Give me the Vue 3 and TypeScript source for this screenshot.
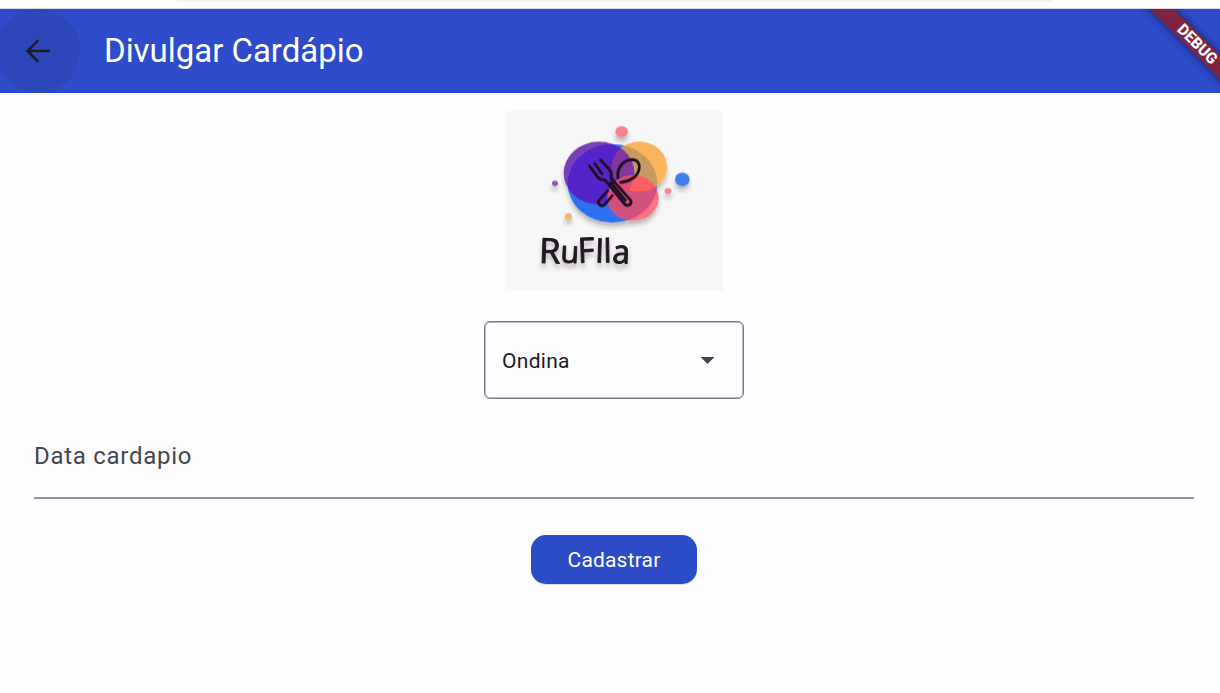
<script setup lang="ts">
import { ref } from 'vue'

const campus = ref<string>('Ondina')
const letters = [
  { char: 'R', x: 116, y: 473, size: 104, turn: 2, stretch: 64 },
  { char: 'u', x: 180, y: 472, size: 92, turn: 3, stretch: 56 },
  { char: 'F', x: 235, y: 473, size: 104, turn: -2, stretch: 50 },
  { char: 'l', x: 286, y: 472, size: 94, turn: 2, stretch: 24 },
  { char: 'l', x: 311, y: 472, size: 96, turn: -1, stretch: 24 },
  { char: 'a', x: 336, y: 474, size: 98, turn: 2, stretch: 53 },
]
</script>

<template>
  <div class="page">
    <div class="browser-strip"><div class="address"></div></div>
    <header class="appbar">
      <button class="back" aria-label="Voltar">
        <svg viewBox="0 0 24 24"><path d="M12.2 1.2 1.5 12l10.7 10.8M2 12h22" /></svg>
      </button>
      <h1>Divulgar Cardápio</h1>
      <div class="banner"><span>DEBUG</span></div>
    </header>
    <main>
      <svg class="logo" viewBox="15 18 654 540" preserveAspectRatio="none">
        <defs>
          <clipPath id="blue-area"><ellipse cx="337.5" cy="235" rx="134.5" ry="118" /></clipPath>
          <clipPath id="orange-area"><ellipse cx="418" cy="185" rx="83" ry="75" /></clipPath>
          <clipPath id="purple-area"><ellipse cx="297" cy="204" rx="106" ry="94" /></clipPath>
          <filter id="drop" x="-30%" y="-30%" width="160%" height="190%">
            <feDropShadow dx="0" dy="13" stdDeviation="7" flood-color="#333" flood-opacity=".3" />
          </filter>
          <filter id="soft"><feGaussianBlur stdDeviation="1.8" /></filter>
        </defs>
        <rect x="15" y="18" width="654" height="540" fill="#f7f7f7" />
        <g filter="url(#soft)">
          <g filter="url(#drop)">
            <ellipse cx="337.5" cy="235" rx="134.5" ry="118" fill="#2f70f4" />
            <ellipse cx="418" cy="185" rx="83" ry="75" fill="#fab45a" />
            <ellipse cx="297" cy="204" rx="106" ry="94" fill="#7740b9" />
            <ellipse cx="399" cy="279" rx="77" ry="68" fill="#fc7183" />
          </g>
          <g clip-path="url(#blue-area)">
            <ellipse cx="418" cy="185" rx="83" ry="75" fill="#c99a60" />
            <ellipse cx="297" cy="204" rx="106" ry="94" fill="#5722c9" />
            <g clip-path="url(#purple-area)"><ellipse cx="418" cy="185" rx="83" ry="75" fill="#82389c" /></g>
            <ellipse cx="399" cy="279" rx="77" ry="68" fill="#d0517e" />
          </g>
          <g clip-path="url(#orange-area)"><ellipse cx="399" cy="279" rx="77" ry="68" fill="#fd6060" /></g>
          <g clip-path="url(#purple-area)"><ellipse cx="399" cy="279" rx="77" ry="68" fill="#e04a78" /></g>
          <g filter="url(#drop)">
            <ellipse cx="365" cy="80" rx="19" ry="17" fill="#f98290" />
            <ellipse cx="547" cy="223" rx="22" ry="20" fill="#437de9" />
            <ellipse cx="504" cy="258" rx="10" ry="9" fill="#f98290" />
            <ellipse cx="165" cy="235" rx="9" ry="8" fill="#9255bd" />
            <ellipse cx="205" cy="334" rx="11" ry="10" fill="#f1b462" />
          </g>
          <g class="utensils">
            <path d="M354 219C350 193 365 167 392 164C414 162 422 178 416 197C410 216 389 230 362 232" />
            <path d="M323 257 297 286C291 297 302 305 313 300L337 272" />
            <path d="M268 183 293 216Q302 225 315 225L371 294C381 308 400 298 391 285L333 219Q337 204 329 195L302 165M284 175 306 206" />
            <path d="M332 232 376 286" />
          </g>
          <g class="wordmark" filter="url(#drop)">
            <text
              v-for="(letter, index) in letters"
              :key="index"
              :x="letter.x"
              :y="letter.y"
              :font-size="letter.size"
              :textLength="letter.stretch"
              lengthAdjust="spacingAndGlyphs"
              :transform="`rotate(${letter.turn} ${letter.x} ${letter.y})`"
            >{{ letter.char }}</text>
          </g>
        </g>
      </svg>
      <button class="select">
        <span>{{ campus }}</span>
        <svg viewBox="0 0 14 7"><path d="M0 0h14L7 7z" /></svg>
      </button>
      <div class="date-field"><span>Data cardapio</span></div>
      <button class="submit">Cadastrar</button>
    </main>
  </div>
</template>

<style>
body { margin: 0; background: #fdfdff; }
</style>

<style scoped>
.page { width: 1220px; height: 693px; overflow: hidden; background: #fdfdff; font-family: Roboto, sans-serif; }
button { font: inherit; box-sizing: border-box; }
.browser-strip { height: 9px; box-sizing: border-box; background: #fff; border-bottom: 1px solid #d9dbe0; overflow: hidden; }
.address { width: 888px; height: 22px; margin: -20px 0 0 170px; border-radius: 11px; background: #f1f3f4; }
.appbar { position: relative; display: flex; align-items: center; height: 84px; background: #2e4bc9; overflow: hidden; }
.back { flex: none; display: flex; align-items: center; justify-content: center; width: 84px; height: 84px; margin-left: -4px; padding: 0; border: 0; border-radius: 50%; background: #2d47b9; }
.back svg { width: 24px; height: 24px; fill: none; stroke: #1b1c22; stroke-width: 2.5; }
h1 { margin: 0 0 0 24px; color: #fff; font-size: 33px; line-height: 40px; font-weight: 400; letter-spacing: -.03px; white-space: nowrap; }
.banner { position: absolute; left: 1116.5px; top: 26.5px; width: 160px; height: 17px; background: #7d2443; box-shadow: 0 0 9px rgba(0, 0, 0, .55); transform: rotate(45deg); color: #fff; text-align: center; font-size: 15.5px; line-height: 17px; font-weight: 800; }
main { display: flex; flex-direction: column; align-items: center; padding: 18px 26px 0 34px; }
.logo { width: 218px; height: 180px; }
.utensils { fill: none; stroke: #1c1024; stroke-width: 8.5; stroke-linecap: round; stroke-linejoin: round; }
.wordmark { fill: #211824; stroke: #211824; stroke-width: 3; stroke-linejoin: round; font-family: "Open Sans", sans-serif; font-weight: 500; }
.select { display: flex; align-items: center; justify-content: space-between; width: 260px; height: 78px; margin-top: 30px; padding: 1px 27px 0 17px; border: 1.5px solid #777b84; border-radius: 6px; background: transparent; box-shadow: inset 0 0 0 .5px #777b84; color: #1b1b1f; font-size: 21px; letter-spacing: .3px; }
.select svg { width: 15px; height: 7px; margin-right: 1px; fill: #44464f; }
.date-field { align-self: stretch; box-sizing: border-box; height: 76px; margin-top: 24px; padding-top: 18px; border-bottom: 2px solid #92959f; color: #45464f; font-size: 24px; line-height: 30px; letter-spacing: .72px; }
.submit { width: 166px; height: 49px; margin-top: 36px; padding: 0; border: 0; border-radius: 15px; background: #2c4bc7; box-shadow: 0 1px 1px rgba(0, 0, 0, .15); color: #fff; font-size: 21px; letter-spacing: .18px; }
</style>
